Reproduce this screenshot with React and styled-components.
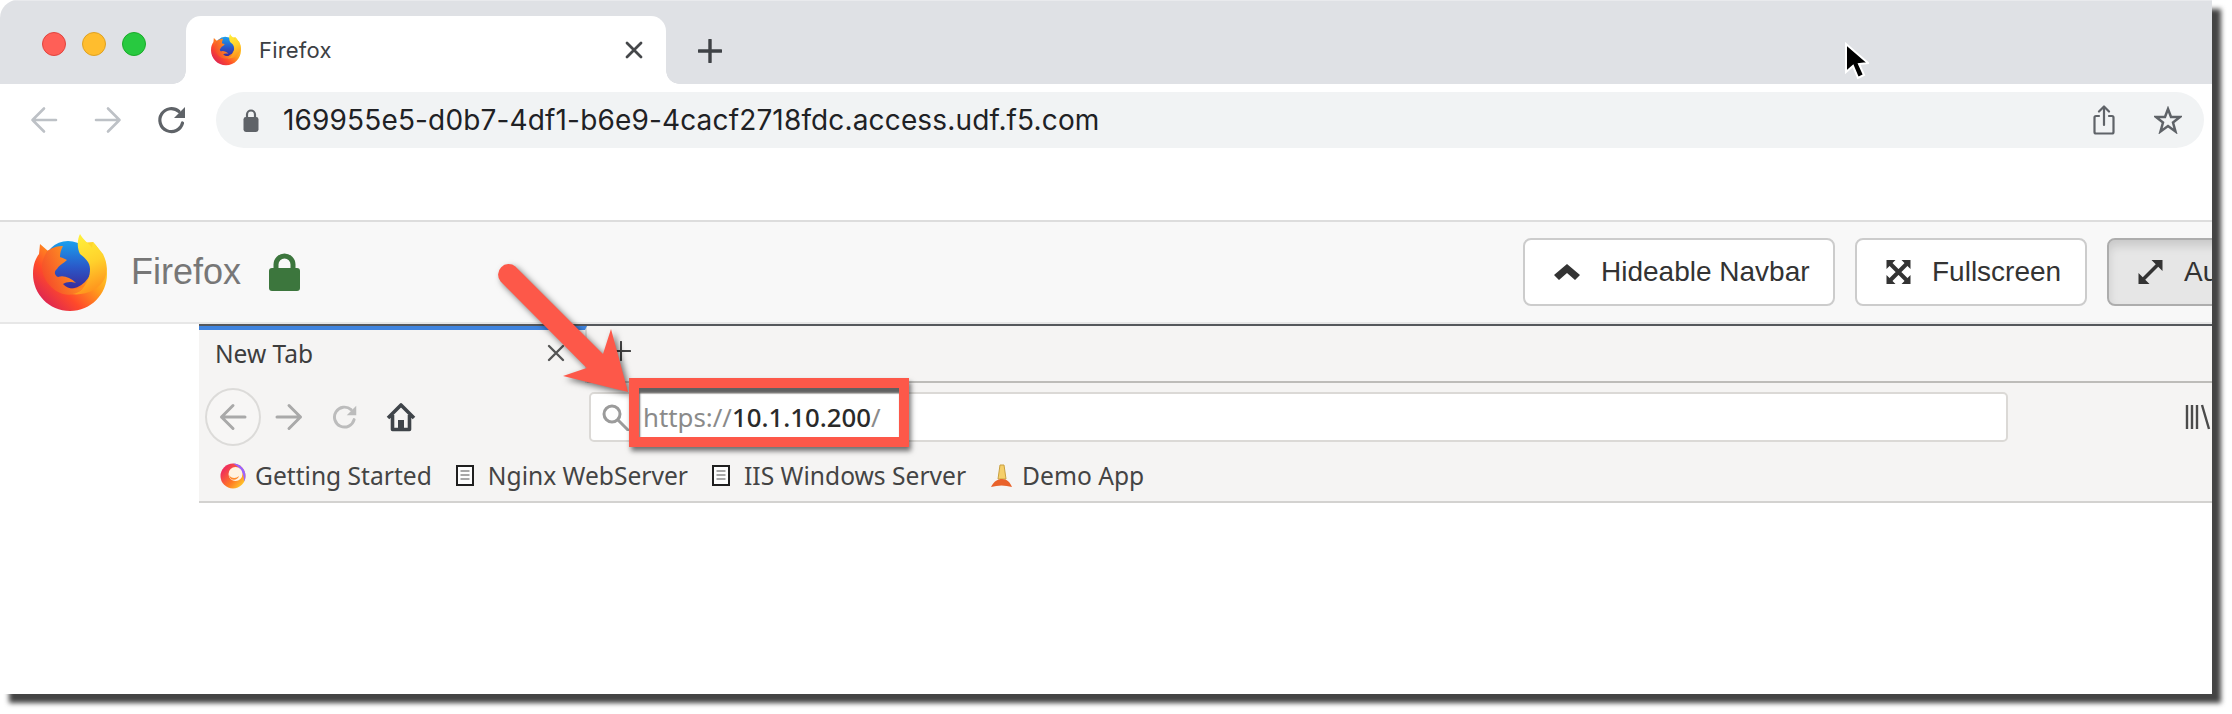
import React from "react";
import styled, { createGlobalStyle } from "styled-components";

const Global = createGlobalStyle`
  html, body { margin: 0; padding: 0; background: #fff; }
  body { width: 2232px; height: 714px; overflow: hidden; }
`;

const Win = styled.div`
  position: relative;
  width: 2212px;
  height: 694px;
  background: #fff;
  border-top-left-radius: 18px;
  box-shadow: 9px 9px 5px #444;
  display: flex;
  flex-direction: column;
`;
const Clip = styled.div`
  width: 100%;
  height: 100%;
  overflow: hidden;
  border-top-left-radius: 18px;
  display: flex;
  flex-direction: column;
`;
const TabBar = styled.div`
  height: 84px;
  flex: none;
  background: #dfe1e5;
  border-top: 1px solid #e9eaed;
  box-sizing: border-box;
  display: flex;
`;
const Lights = styled.div`
  width: 186px;
  flex: none;
  box-sizing: border-box;
  padding: 3px 0 0 42px;
  display: flex;
  gap: 16px;
  align-items: center;
`;
const Light = styled.span`
  width: 24px;
  height: 24px;
  border-radius: 50%;
  box-sizing: border-box;
  background: ${(p) => p.$c};
  border: 1px solid ${(p) => p.$b};
`;
const ChromeTab = styled.div`
  position: relative;
  width: 480px;
  height: 68px;
  align-self: flex-end;
  flex: none;
  box-sizing: border-box;
  background: #fff;
  border-radius: 15px 15px 0 0;
  padding: 0 23px 0 25px;
  display: flex;
  align-items: center;
  gap: 18px;
  &::before, &::after {
    content: "";
    position: absolute;
    bottom: 0;
    width: 13px;
    height: 13px;
  }
  &::before { left: -13px; background: radial-gradient(circle at 0 0, #dfe1e5 12.5px, #fff 13px); }
  &::after { right: -13px; background: radial-gradient(circle at 100% 0, #dfe1e5 12.5px, #fff 13px); }
`;
const ChromeTabTitle = styled.span`
  flex: 1;
  font: 400 22px Inter, "Liberation Sans", sans-serif;
  color: #3c4043;
  letter-spacing: 0.2px;
`;
const NewTabBtn = styled.div`
  margin: 16px 0 0 30px;
  width: 28px;
  height: 68px;
  display: flex;
  align-items: center;
  justify-content: center;
`;
const Toolbar = styled.div`
  height: 64px;
  flex: none;
  box-sizing: border-box;
  padding: 8px 8px 0 12px;
  display: flex;
  background: #fff;
`;
const ToolBtn = styled.div`
  width: 64px;
  height: 56px;
  flex: none;
  display: flex;
  align-items: center;
  justify-content: center;
`;
const Omnibox = styled.div`
  flex: 1;
  margin-left: 12px;
  height: 56px;
  border-radius: 28px;
  background: #f1f3f4;
  box-sizing: border-box;
  padding: 0 22px 0 27px;
  display: flex;
  align-items: center;
`;
const OmniText = styled.span`
  flex: 1;
  margin-left: 24px;
  font: 400 28px Inter, "Liberation Sans", sans-serif;
  letter-spacing: 0.15px;
  color: #202124;
`;
const OmniIcons = styled.div`
  display: flex;
  align-items: center;
  gap: 39px;
`;
const Spacer = styled.div`
  height: 72px;
  flex: none;
  background: #fff;
`;
const Navbar = styled.div`
  height: 104px;
  flex: none;
  box-sizing: border-box;
  background: #f8f8f8;
  border-top: 2px solid #ddd;
  border-bottom: 2px solid #e7e7e7;
  display: grid;
  grid-template-columns: 1523px 800px;
  align-items: center;
`;
const Brand = styled.div`
  display: flex;
  align-items: center;
  padding-left: 33px;
`;
const BrandName = styled.span`
  margin-left: 24px;
  font: 400 36px "Liberation Sans", Arial, sans-serif;
  color: #777;
`;
const BrandLockSlot = styled.span`
  margin-left: 28px;
  display: flex;
`;
const NavButtons = styled.div`
  display: flex;
  gap: 20px;
`;
const NavBtn = styled.div`
  height: 68px;
  width: ${(p) => p.$w}px;
  flex: none;
  box-sizing: border-box;
  border: 2px solid ${(p) => (p.$active ? "#adadad" : "#ccc")};
  border-radius: 8px;
  background: ${(p) => (p.$active ? "#e6e6e6" : "#fff")};
  box-shadow: ${(p) => (p.$active ? "inset 0 6px 10px rgba(0,0,0,.125)" : "none")};
  padding-left: 29px;
  display: flex;
  align-items: center;
  gap: 21px;
  font: 400 28px "Liberation Sans", Arial, sans-serif;
  color: #333;
`;
const Inner = styled.div`
  margin-left: 199px;
  flex: none;
  border-top: 2px solid #55585c;
  background: #f5f4f3;
  display: flex;
  flex-direction: column;
`;
const InnerTabs = styled.div`
  height: 57px;
  display: flex;
  flex: none;
  box-sizing: border-box;
`;
const InnerTab = styled.div`
  width: 388px;
  flex: none;
  box-sizing: border-box;
  border-top: 4px solid #3f84df;
  border-right: 2px solid #dcdbd9;
  padding: 0 20px 7px 16px;
  display: flex;
  align-items: center;
  justify-content: space-between;
  font: 400 24.5px "Noto Sans", sans-serif;
  color: #3d3d3d;
`;
const InnerTabRest = styled.div`
  flex: 1;
  border-bottom: 2px solid #bdbcb9;
  padding: 0 0 6px 24px;
  display: flex;
  align-items: center;
`;
const InnerNav = styled.div`
  height: 64px;
  flex: none;
  box-sizing: border-box;
  padding: 4px 0 0 6px;
  display: flex;
  align-items: center;
`;
const BackCircle = styled.div`
  width: 56px;
  height: 58px;
  flex: none;
  box-sizing: border-box;
  border: 2px solid #dcdbd9;
  border-radius: 50%;
  background: #f7f6f5;
  display: flex;
  align-items: center;
  justify-content: center;
`;
const InnerIcon = styled.div`
  width: 56px;
  flex: none;
  display: flex;
  justify-content: center;
`;
const UrlBar = styled.div`
  width: 1419px;
  height: 50px;
  margin-left: 160px;
  flex: none;
  box-sizing: border-box;
  background: #fff;
  border: 2px solid #dbd9d6;
  border-radius: 5px;
  padding-left: 10px;
  display: flex;
  align-items: center;
  gap: 14px;
  font: 400 25.8px "Noto Sans", sans-serif;
  color: #8a8a8a;
`;
const UrlHost = styled.b`
  font-weight: 500;
  color: #2a2a2a;
`;
const Library = styled.div`
  margin-left: 177px;
  display: flex;
`;
const Bookmarks = styled.div`
  height: 56px;
  flex: none;
  box-sizing: border-box;
  border-bottom: 2px solid #d3d2d0;
  padding: 3px 0 0 21px;
  display: flex;
  align-items: center;
  font: 400 24.6px "Noto Sans", sans-serif;
  color: #444;
`;
const Bookmark = styled.div`
  display: flex;
  align-items: center;
  gap: ${(p) => p.$gap}px;
  margin-right: ${(p) => p.$mr}px;
`;
const RedBox = styled.div`
  position: absolute;
  left: 629px;
  top: 378px;
  width: 280px;
  height: 69px;
  box-sizing: border-box;
  border: 10px solid #fd5849;
  box-shadow: 2px 4px 5px rgba(0,0,0,.55), inset 1px 5px 2px rgba(70,70,70,.85);
`;
const Arrow = styled.svg`
  position: absolute;
  left: 490px;
  top: 255px;
  filter: drop-shadow(3px 3px 3px rgba(0,0,0,.55));
`;
const Cursor = styled.svg`
  position: absolute;
  left: 1843px;
  top: 42px;
`;

const FirefoxLogo = ({ size, id }) => (
  <svg width={size} height={size * 77 / 74} viewBox="0 0 74 77" style={{ flex: "none" }}>
    <defs>
      <linearGradient id={id + "o"} x1="0.9" y1="0.25" x2="0.2" y2="0.9">
        <stop offset="0" stopColor="#ffd52c" />
        <stop offset="0.35" stopColor="#ff9a1c" />
        <stop offset="0.7" stopColor="#ff4a2a" />
        <stop offset="1" stopColor="#e0284f" />
      </linearGradient>
      <linearGradient id={id + "g"} x1="0.55" y1="0" x2="0.55" y2="1">
        <stop offset="0" stopColor="#1aa0ee" />
        <stop offset="0.55" stopColor="#2a58c8" />
        <stop offset="1" stopColor="#3b2a9a" />
      </linearGradient>
      <linearGradient id={id + "y"} x1="0.3" y1="0" x2="0.55" y2="1">
        <stop offset="0" stopColor="#fff03a" />
        <stop offset="0.5" stopColor="#ffd22c" />
        <stop offset="1" stopColor="#ff8f1c" />
      </linearGradient>
      <linearGradient id={id + "f"} x1="0.9" y1="0.2" x2="0" y2="0.7">
        <stop offset="0" stopColor="#ffa41f" />
        <stop offset="1" stopColor="#f5472b" />
      </linearGradient>
    </defs>
    <path d="M7 10L15 17L35 10L60 8C68 16 74 28 74 40C74 60 58 77 37 77C16 77 0 60 0 40C0 30 3 24 6 20Z" fill={`url(#${id}o)`} />
    <circle cx="35" cy="31" r="24" fill={`url(#${id}g)`} />
    <path d="M14 17C20 13 25 12 30 12C28 16 27 19 27 23C30 24 32 25 34 26C30 30 26 31 24 35C21 37 21 41 25 43C30 41 37 43 43 49C37 47 33 48 30 50C34 55 42 56 50 53C46 60 38 62 30 60C18 56 8 44 9 30C10 25 12 21 14 17Z" fill={`url(#${id}f)`} />
    <path d="M47 0C44 6 44 14 47 20C52 24 57 28 57 35C57 42 55 48 50 54C47 58 42 60 38 60C52 62 66 56 72 44C75 36 74 28 70 20C67 16 63 12 60 8L59 14C56 9 50 6 47 0Z" fill={`url(#${id}y)`} />
  </svg>
);

const LeftArrow = ({ c, s = 28, w = 2.6 }) => (
  <svg width={s} height={s} viewBox="0 0 28 28" fill="none" stroke={c} strokeWidth={w} strokeLinecap="round" strokeLinejoin="round">
    <path d="M26 14H2.5M14 2.5L2.5 14L14 25.5" />
  </svg>
);
const RightArrow = ({ c, s = 28, w = 2.6 }) => (
  <svg width={s} height={s} viewBox="0 0 28 28" fill="none" stroke={c} strokeWidth={w} strokeLinecap="round" strokeLinejoin="round">
    <path d="M2 14H25.5M14 2.5L25.5 14L14 25.5" />
  </svg>
);
const Reload = ({ c, s = 30, w = 3.2 }) => (
  <svg width={s} height={s} viewBox="0 0 30 30" fill="none">
    <path d="M25.5 18A11.5 11.5 0 1 1 22 6.5" stroke={c} strokeWidth={w} strokeLinecap="round" />
    <path d="M28 2V13H17Z" fill={c} />
  </svg>
);
const X = ({ c, s = 18, w = 2.8 }) => (
  <svg width={s} height={s} viewBox="0 0 18 18" stroke={c} strokeWidth={w} strokeLinecap="round">
    <path d="M2 2L16 16M16 2L2 16" />
  </svg>
);
const Plus = ({ c, s = 24, w = 3.4 }) => (
  <svg width={s} height={s} viewBox="0 0 24 24" stroke={c} strokeWidth={w} strokeLinecap="round">
    <path d="M12 1V23M1 12H23" />
  </svg>
);
const PadLock = ({ c }) => (
  <svg width="16" height="24" viewBox="0 0 16 24" style={{ flex: "none" }}>
    <path d="M4 10V6.5a4 4 0 0 1 8 0V10" fill="none" stroke={c} strokeWidth="2.2" />
    <rect x="0.5" y="9" width="15" height="15" rx="2.4" fill={c} />
  </svg>
);
const BrandLock = () => (
  <svg width="31" height="38" viewBox="0 0 31 38" style={{ flex: "none" }}>
    <path d="M7 17V11.500a8.500 8.500 0 0 1 17 0V17" fill="none" stroke="#3c763d" strokeWidth="5" />
    <rect x="0" y="15" width="31" height="23" rx="3" fill="#3c763d" />
  </svg>
);
const Share = () => (
  <svg width="22" height="30" viewBox="0 0 22 30" fill="none" stroke="#5f6368" strokeWidth="2.2" strokeLinecap="round" strokeLinejoin="round">
    <path d="M6 11H3a1.5 1.5 0 0 0-1.500 1.500V27a1.500 1.500 0 0 0 1.500 1.500H19a1.500 1.500 0 0 0 1.500-1.500V12.500A1.500 1.500 0 0 0 19 11H16" />
    <path d="M11 20V2M6 6.500L11 1.500L16 6.500" />
  </svg>
);
const Star = () => (
  <svg width="28" height="28" viewBox="0 0 28 28" fill="none" stroke="#5f6368" strokeWidth="2.500" strokeLinejoin="miter">
    <path d="M14 3L17 11H26L19 16.500L21.500 25.500L14 20L6.500 25.500L9 16.500L2 11H11Z" />
  </svg>
);
const ChevronUp = () => (
  <svg width="26" height="16" viewBox="0 0 26 16" fill="#333">
    <path d="M13 0L26 11L21 16L13 9L5 16L0 11Z" />
  </svg>
);
const Fullscreen = () => (
  <svg width="25" height="24" viewBox="0 0 24 24" fill="#333" stroke="none">
    <path d="M0 0H9L0 9ZM24 0H15L24 9ZM0 24H9L0 15ZM24 24H15L24 15Z" />
    <path d="M3 3L21 21M21 3L3 21" stroke="#333" strokeWidth="4" />
  </svg>
);
const Resize = () => (
  <svg width="25" height="24" viewBox="0 0 24 24" fill="#333">
    <path d="M13 0H24V11ZM0 24V13L11 24Z" />
    <path d="M19 5L5 19" stroke="#333" strokeWidth="3.500" />
  </svg>
);
const Home = () => (
  <svg width="30" height="30" viewBox="0 0 30 30" fill="none" stroke="#3f4449" strokeWidth="3.600" strokeLinejoin="round">
    <path d="M2 16L15 3L28 16M6.500 13V27.500H23.500V13" />
    <rect x="12" y="18" width="6" height="10" fill="#3f4449" stroke="none" />
  </svg>
);
const Search = () => (
  <svg width="28" height="28" viewBox="0 0 28 28" fill="none" stroke="#9b9b9b" strokeWidth="3" strokeLinecap="round">
    <circle cx="11" cy="11" r="8" />
    <path d="M17 17L27 27" />
  </svg>
);
const Doc = () => (
  <svg width="18" height="21" viewBox="0 0 18 21" fill="#fdfdfd" stroke="#1f1f1f" strokeWidth="2" style={{ flex: "none" }}>
    <rect x="1" y="1" width="16" height="19" />
    <path d="M4.500 6H13.500M4.500 10H13.500M4.500 14H13.500" stroke="#8a8a8a" strokeWidth="1.500" />
  </svg>
);
const DemoIcon = () => (
  <svg width="21" height="23" viewBox="0 0 21 23" style={{ flex: "none" }}>
    <path d="M9 1H13L15 15H7Z" fill="#f5cf6a" stroke="#c9a040" strokeWidth="1" />
    <path d="M0 23C3 17 7 15 11 15C16 15 19 18 21 23C14 21 7 21 0 23Z" fill="#e9622a" />
  </svg>
);
const QuantumIcon = () => (
  <svg width="26" height="26" viewBox="0 0 26 26" style={{ flex: "none" }}>
    <defs>
      <linearGradient id="qt" x1="0.1" y1="0.3" x2="0.8" y2="0.9">
        <stop offset="0" stopColor="#f0305a" />
        <stop offset="0.6" stopColor="#ff7a24" />
        <stop offset="1" stopColor="#ffc02a" />
      </linearGradient>
    </defs>
    <circle cx="13" cy="13" r="12.500" fill="url(#qt)" />
    <path d="M13 0.500C20 0.500 25.500 6 25.500 13C25.500 15 25 17 24 18.500C24.500 11 20 4 13 0.500Z" fill="#9a62ff" />
    <circle cx="15.500" cy="11" r="7" fill="#fff3e0" />
    <path d="M9 12C11 15.500 16 16 19 13C17.500 18 10 18.500 9 12Z" fill="#ff8a2a" />
  </svg>
);
const LibraryIcon = () => (
  <svg width="26" height="26" viewBox="0 0 26 26" fill="none" stroke="#4b4b4b" strokeWidth="2.400" style={{ flex: "none" }}>
    <path d="M2 1V25M7 1V25M12 1V25M17 1L24 25" />
  </svg>
);

export default function App() {
  return (
    <>
      <Global />
      <Win>
        <Clip>
          <TabBar>
            <Lights>
              <Light $c="#ff5f57" $b="#e0443e" />
              <Light $c="#ffbd2e" $b="#dea123" />
              <Light $c="#28c940" $b="#1aab29" />
            </Lights>
            <ChromeTab>
              <FirefoxLogo size={30} id="fa" />
              <ChromeTabTitle>Firefox</ChromeTabTitle>
              <X c="#45474a" />
            </ChromeTab>
            <NewTabBtn>
              <Plus c="#3f4246" />
            </NewTabBtn>
          </TabBar>
          <Toolbar>
            <ToolBtn><LeftArrow c="#bdc1c6" /></ToolBtn>
            <ToolBtn><RightArrow c="#bdc1c6" /></ToolBtn>
            <ToolBtn><Reload c="#5f6368" /></ToolBtn>
            <Omnibox>
              <PadLock c="#5f6368" />
              <OmniText>169955e5-d0b7-4df1-b6e9-4cacf2718fdc.access.udf.f5.com</OmniText>
              <OmniIcons>
                <Share />
                <Star />
              </OmniIcons>
            </Omnibox>
          </Toolbar>
          <Spacer />
          <Navbar>
            <Brand>
              <FirefoxLogo size={74} id="br" />
              <BrandName>Firefox</BrandName>
              <BrandLockSlot><BrandLock /></BrandLockSlot>
            </Brand>
            <NavButtons>
              <NavBtn $w={312}><ChevronUp />Hideable Navbar</NavBtn>
              <NavBtn $w={232}><Fullscreen />Fullscreen</NavBtn>
              <NavBtn $w={200} $active><Resize />Auto</NavBtn>
            </NavButtons>
          </Navbar>
          <Inner>
            <InnerTabs>
              <InnerTab>
                New Tab
                <X c="#555" s={18} w={2.4} />
              </InnerTab>
              <InnerTabRest>
                <Plus c="#444" s={20} w={2.4} />
              </InnerTabRest>
            </InnerTabs>
            <InnerNav>
              <BackCircle><LeftArrow c="#a9a9a9" s={28} w={3} /></BackCircle>
              <InnerIcon><RightArrow c="#a9a9a9" s={28} w={3} /></InnerIcon>
              <InnerIcon><Reload c="#bcbcbc" s={26} w={3.4} /></InnerIcon>
              <InnerIcon><Home /></InnerIcon>
              <UrlBar>
                <Search />
                <span>https://<UrlHost>10.1.10.200</UrlHost>/</span>
              </UrlBar>
              <Library><LibraryIcon /></Library>
            </InnerNav>
            <Bookmarks>
              <Bookmark $gap={9} $mr={24}><QuantumIcon />Getting Started</Bookmark>
              <Bookmark $gap={14} $mr={24}><Doc />Nginx WebServer</Bookmark>
              <Bookmark $gap={14} $mr={25}><Doc />IIS Windows Server</Bookmark>
              <Bookmark $gap={10} $mr={0}><DemoIcon />Demo App</Bookmark>
            </Bookmarks>
          </Inner>
        </Clip>
        <Arrow width="150" height="150" viewBox="0 0 150 150">
          <path d="M138 137L73 121L96.700 113L10.600 26.400A10.500 10.500 0 0 1 25.400 11.600L113 99L121 74Z" fill="#fd5849" />
        </Arrow>
        <RedBox />
        <Cursor width="26" height="40" viewBox="0 0 26 40">
          <path d="M3 2V30L10 24L15 36L21 33L16 22L25 21Z" fill="#000" stroke="#fff" strokeWidth="2" />
        </Cursor>
      </Win>
    </>
  );
}
